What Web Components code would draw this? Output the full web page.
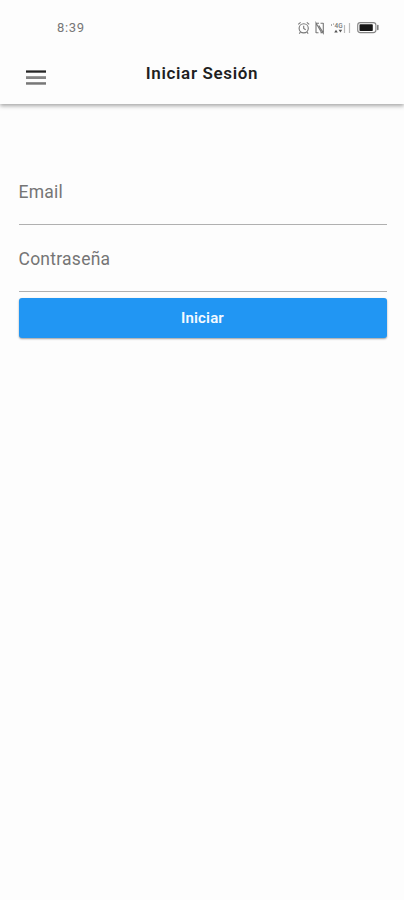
<!DOCTYPE html>
<html lang="es">
<head>
<meta charset="utf-8">
<meta name="viewport" content="width=device-width, initial-scale=1">
<title>Iniciar Sesión</title>
<style>
  html, body { margin: 0; height: 100%; background: #fdfdfd; overflow: hidden; }
  body { font-family: Roboto, "Liberation Sans", sans-serif; }
</style>
</head>
<body>
<login-page></login-page>
<script>
const define = (name, html) => customElements.define(name, class extends HTMLElement {
  constructor() {
    super();
    const t = document.createElement('template');
    t.innerHTML = html;
    this.attachShadow({ mode: 'open' }).append(t.content.cloneNode(true));
  }
});

define('status-bar', `
<style>
  :host { display: flex; justify-content: space-between; align-items: center; height: 54px; box-sizing: border-box; padding: 2px 24px 0 57px; }
  .time { font-size: 13px; line-height: 16px; letter-spacing: .65px; color: #777; }
  svg { display: block; }
</style>
<span class="time"><slot></slot></span>
<svg width="84" height="16" viewBox="296 20 84 16" fill="none">
  <g stroke="#777" stroke-width="1.1">
    <circle cx="303.7" cy="28.3" r="4.6"/>
    <path d="M303.7 25.8v2.7l2 1.2M298.2 24.4l2.4-2M309.2 24.4l-2.4-2M300.5 32.2l-1.3 1.4M306.9 32.2l1.3 1.4"/>
  </g>
  <g stroke="#777" stroke-width="1.1">
    <path d="M316 33v-10l5.5 9.5M323.3 23v10l-4.5-7.5M316 23.3h3M320.5 23.3h2.8M316 32.7h2.5M320.5 32.7h2.8"/>
  </g>
  <path d="M331.5 24v2M333.6 23.3v1.6" stroke="#aaa"/>
  <text x="334.6" y="28" font-family="Roboto, sans-serif" font-size="6.5" font-weight="500" fill="#777">4G</text>
  <path d="M336 29.8l1.8 2.7h-3.6zM340.4 32.5l-1.8-2.7h3.6z" fill="#555"/>
  <path d="M344.5 25v8" stroke="#bbb" stroke-width="1.2"/>
  <path d="M349.5 23v10" stroke="#bbb" stroke-width="1.2"/>
  <rect x="357.7" y="22.6" width="18.2" height="10" rx="2.6" stroke="#858585" stroke-width="1.1"/>
  <rect x="359.5" y="24.2" width="13.3" height="6.9" rx=".8" fill="#161616"/>
  <path d="M377.8 25.6v4" stroke="#777" stroke-width="1.5" stroke-linecap="round"/>
</svg>`);

define('menu-button', `
<style>
  :host { display: block; width: 20px; height: 15px; }
  svg { display: block; }
</style>
<svg width="20" height="15" viewBox="0 0 20 15" role="img" aria-label="Menú">
  <rect width="20" height="2.3" y=".4" fill="#252525"/>
  <rect width="20" height="2.8" y="6.2" fill="#858585"/>
  <rect width="20" height="2.5" y="12.2" fill="#777"/>
</svg>`);

define('app-header', `
<style>
  :host { display: block; height: 104px; background: #fdfdfd; box-shadow: 0 2px 4px rgba(0,0,0,.34); }
  .bar { display: grid; grid-template-columns: 1fr auto 1fr; height: 50px; padding: 0 26px; }
  menu-button { margin-top: 16px; }
  h1 { margin: 7px 0 0; font-size: 17px; line-height: 24px; font-weight: 600; letter-spacing: .64px; color: #1f1f1f; white-space: nowrap; }
</style>
<status-bar>8:39</status-bar>
<div class="bar"><menu-button></menu-button><h1><slot></slot></h1><span></span></div>`);

define('text-field', `
<style>
  :host { display: block; height: 67px; box-sizing: border-box; padding-top: 22px; border-bottom: 1.5px solid #b0b0b0; }
  label { display: block; font-size: 17.5px; line-height: 24px; letter-spacing: .25px; color: #757575; }
</style>
<label><slot></slot></label>`);

define('primary-button', `
<style>
  :host { display: block; margin-top: 6px; }
  button { display: block; width: 100%; height: 40px; border: 0; border-radius: 3px; padding: 1px 0 0; background: #2196f3;
    box-shadow: 0 1px 2px rgba(0,0,0,.38); color: #f4faff; font: 600 15px/39px Roboto, "Liberation Sans", sans-serif; letter-spacing: .15px; }
</style>
<button type="button"><slot></slot></button>`);

define('login-page', `
<style>
  :host { display: block; height: 900px; }
  main { padding: 54px 17.5px 0 18.5px; }
</style>
<app-header>Iniciar Sesión</app-header>
<main>
  <text-field>Email</text-field>
  <text-field>Contraseña</text-field>
  <primary-button>Iniciar</primary-button>
</main>`);
</script>
</body>
</html>
